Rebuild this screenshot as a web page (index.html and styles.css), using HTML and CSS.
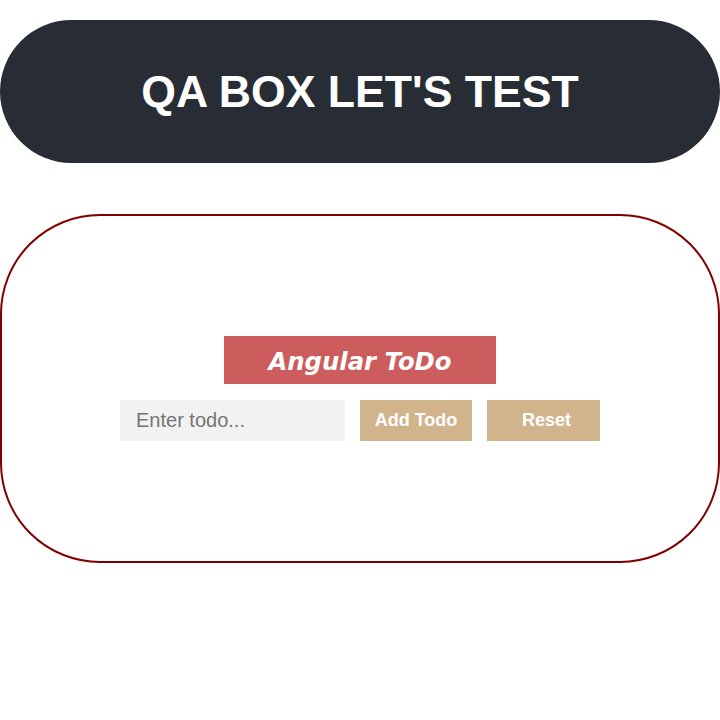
FILE: index.html
```html
<!DOCTYPE html>
<html>
<head>
<meta charset="utf-8">
<link rel="stylesheet" href="styles.css">
</head>
<body>
<header class="header">
  <h1 class="header-title">QA BOX LET'S TEST</h1>
</header>
<main class="card">
  <h2 class="todo-title">Angular ToDo</h2>
  <div class="todo-row">
    <input class="todo-input" type="text" placeholder="Enter todo...">
    <button class="btn">Add Todo</button>
    <button class="btn btn-reset">Reset</button>
  </div>
</main>
</body>
</html>
```

FILE: styles.css
```css
html, body {
  margin: 0;
  padding: 0;
  background: #fff;
  font-family: "Liberation Sans", Arial, sans-serif;
}
.header {
  margin-top: 20px;
  height: 143px;
  background: #282c34;
  border-radius: 72px;
  display: flex;
  align-items: center;
  justify-content: center;
}
.header-title {
  margin: 0;
  color: #fff;
  font-size: 44.6px;
  font-weight: bold;
}
.card {
  margin-top: 51px;
  height: 345px;
  border: 2px solid #800000;
  border-radius: 100px;
  display: flex;
  flex-direction: column;
  align-items: center;
  justify-content: center;
  gap: 16px;
}
.todo-title {
  margin: 0;
  width: 272px;
  height: 48px;
  padding-top: 3px;
  box-sizing: border-box;
  background: #cd5c5c;
  color: #fff;
  font-family: "DejaVu Sans", Verdana, sans-serif;
  font-style: italic;
  font-weight: bold;
  font-size: 24.3px;
  display: flex;
  align-items: center;
  justify-content: center;
}
.todo-row {
  display: flex;
  gap: 15px;
}
.todo-input {
  width: 225px;
  height: 41px;
  box-sizing: border-box;
  border: none;
  background: #f2f2f2;
  padding: 0 16px;
  font-family: "Liberation Sans", Arial, sans-serif;
  font-size: 20px;
  color: #333;
  outline: none;
}
.todo-input::placeholder {
  color: #757575;
}
.btn {
  width: 112px;
  height: 41px;
  border: none;
  background: #d2b48c;
  color: #fff;
  font-family: "Liberation Sans", Arial, sans-serif;
  font-weight: bold;
  font-size: 18px;
  padding: 0;
  margin: 0;
}
.btn-reset {
  width: 113px;
  padding-left: 6px;
}
```
